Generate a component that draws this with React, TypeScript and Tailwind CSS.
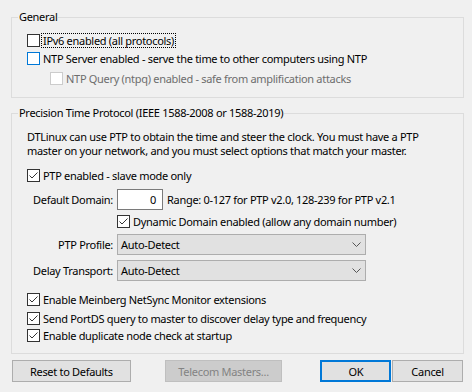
import React from 'react';
import clsx from 'clsx';

const Box: React.FC<{ checked?: boolean; disabled?: boolean; hover?: boolean }> = ({ checked, disabled, hover }) => (
  <span
    className={clsx(
      'w-[13px] h-[13px] border bg-white flex items-center justify-center shrink-0',
      disabled ? 'border-[#cccccc]' : hover ? 'border-[#0078d7]' : 'border-[#333333]'
    )}
  >
    {checked && (
      <svg width="11" height="11" viewBox="0 0 11 11">
        <path d="M1.5 5.5 L4 8 L9.5 2.5" stroke="#333333" fill="none" strokeWidth="1" />
      </svg>
    )}
  </span>
);

const Check: React.FC<{
  label: string;
  checked?: boolean;
  disabled?: boolean;
  hover?: boolean;
  focus?: boolean;
  className?: string;
}> = ({ label, checked, disabled, hover, focus, className }) => (
  <div className={clsx('flex items-center h-[17px] whitespace-nowrap', className)}>
    <Box checked={checked} disabled={disabled} hover={hover} />
    {focus ? (
      <span className="ml-[1px] px-[1px] border border-dotted border-black leading-[13px]">{label}</span>
    ) : (
      <span className={clsx('ml-[3px]', disabled && 'text-[#6d6d6d]')}>{label}</span>
    )}
  </div>
);

const Combo: React.FC<{ value: string }> = ({ value }) => (
  <div className="w-[249px] h-[21px] bg-[#e1e1e1] border border-[#adadad] flex items-center pl-[3px] pr-[4px]">
    <span className="flex-1">{value}</span>
    <svg width="9" height="6" viewBox="0 0 9 6">
      <path d="M0.5 0.5 L4.5 4.5 L8.5 0.5" stroke="#555555" fill="none" strokeWidth="1" />
    </svg>
  </div>
);

const Label: React.FC<{ children: React.ReactNode }> = ({ children }) => (
  <span className="w-[86px] text-right mr-[4px] shrink-0 whitespace-nowrap">{children}</span>
);

export default function App() {
  return (
    <div
      className="w-[472px] h-[392px] bg-[#f0f0f0] pt-[9px] pl-[11px] text-[11px] tracking-[-0.3px] leading-[13px] text-black"
      style={{ fontFamily: '"Noto Sans", "Open Sans", sans-serif' }}
    >
      {/* General */}
      <fieldset className="w-[453px] border border-[#dcdcdc] p-0 m-0">
        <legend className="ml-[6px] px-[1px] leading-[16px]">General</legend>
        <div className="pl-[15px] pt-[7px] pb-[10px]">
          <Check label="IPv6 enabled (all protocols)" focus />
          <Check label="NTP Server enabled - serve the time to other computers using NTP" hover className="mt-[1px]" />
          <Check
            label="NTP Query (ntpq) enabled - safe from amplification attacks"
            disabled
            className="mt-[3px] ml-[23px]"
          />
        </div>
      </fieldset>

      {/* PTP */}
      <fieldset className="w-[453px] border border-[#dcdcdc] p-0 m-0 mt-[7px]">
        <legend className="ml-[6px] px-[1px] leading-[16px]">Precision Time Protocol (IEEE 1588-2008 or 1588-2019)</legend>
        <div className="pl-[15px] pt-[9px] pb-[9px]">
          <p className="whitespace-nowrap leading-[14px]">
            DTLinux can use PTP to obtain the time and steer the clock. You must have a PTP
            <br />
            master on your network, and you must select options that match your master.
          </p>
          <Check label="PTP enabled - slave mode only" checked className="mt-[9px]" />

          <div className="flex items-center h-[21px] mt-[5px]">
            <Label>Default Domain:</Label>
            <div className="w-[46px] h-[21px] bg-white border border-[#7a7a7a] flex items-center justify-end pr-[6px]">
              0
            </div>
            <span className="ml-[4px] whitespace-nowrap">Range: 0-127 for PTP v2.0, 128-239 for PTP v2.1</span>
          </div>
          <Check label="Dynamic Domain enabled (allow any domain number)" checked className="mt-[3px] ml-[90px]" />

          <div className="flex items-center h-[21px] mt-[4px]">
            <Label>PTP Profile:</Label>
            <Combo value="Auto-Detect" />
          </div>
          <div className="flex items-center h-[21px] mt-[5px]">
            <Label>Delay Transport:</Label>
            <Combo value="Auto-Detect" />
          </div>

          <Check label="Enable Meinberg NetSync Monitor extensions" checked className="mt-[10px]" />
          <Check label="Send PortDS query to master to discover delay type and frequency" checked className="mt-[2px]" />
          <Check label="Enable duplicate node check at startup" checked />
        </div>
      </fieldset>

      {/* Buttons */}
      <div className="flex mt-[6px] h-[22px] w-[452px]">
        <button className="w-[119px] h-[22px] bg-[#e1e1e1] border border-[#adadad] ml-[1px]">Reset to Defaults</button>
        <button disabled className="w-[118px] h-[22px] bg-[#cccccc] border border-[#bfbfbf] text-[#838383] ml-[34px]">
          Telecom Masters...
        </button>
        <button className="w-[71px] h-[22px] bg-[#e1e1e1] border-2 border-[#0078d7] ml-[38px]">OK</button>
        <button className="w-[71px] h-[22px] bg-[#e1e1e1] border border-[#adadad] ml-[1px]">Cancel</button>
      </div>
    </div>
  );
}
